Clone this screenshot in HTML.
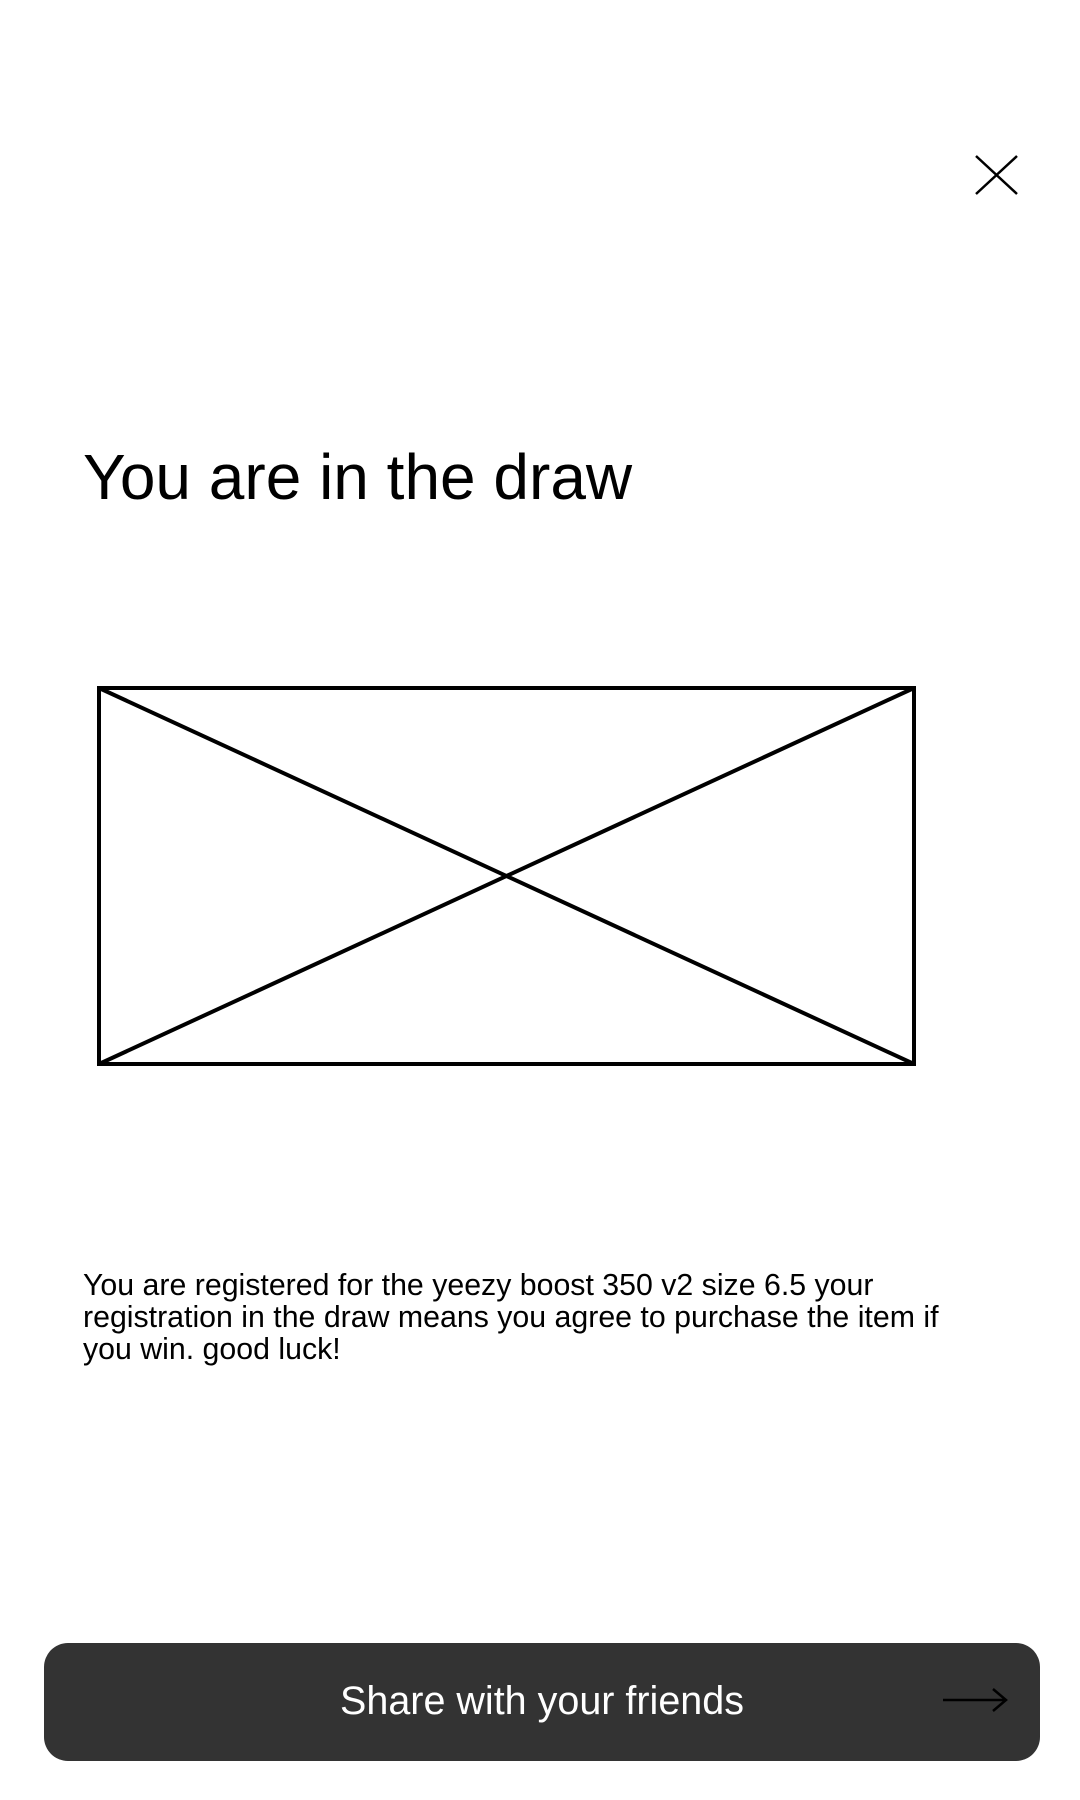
<!DOCTYPE html>
<html><head><meta charset="utf-8"><style>
html,body{margin:0;padding:0;background:#fff;width:1080px;height:1800px;overflow:hidden;font-family:"Liberation Sans",Arial,sans-serif;color:#000}
.t{position:absolute;left:83px;top:439px;font-size:64px;line-height:76px;margin:0;font-weight:normal}
.p{position:absolute;left:83px;top:1270px;width:880px;font-size:30.3px;line-height:32px;margin:0}
.b{position:absolute;left:44px;top:1643px;width:996px;height:118px;background:#333;border-radius:24px;color:#fff;font-size:39.5px;text-align:center;line-height:116px}
</style></head><body>
<svg style="position:absolute;left:972px;top:153px" width="48" height="44"><path d="M4 3L45 41M45 3L4 41" stroke="#000" stroke-width="2.5" fill="none"/></svg>
<h1 class="t">You are in the draw</h1>
<svg style="position:absolute;left:0;top:0" width="1080" height="1100"><g stroke="#000" stroke-width="4" fill="none"><rect x="99" y="688" width="815" height="376"/><path d="M99 688L914 1064M914 688L99 1064"/></g></svg>
<p class="p">You are registered for the yeezy boost 350 v2 size 6.5 your registration in the draw means you agree to purchase the item if you win. good luck!</p>
<div class="b">Share with your friends<svg style="position:absolute;left:897px;top:42px" width="68" height="30"><path d="M2 15H64M52 4L65 15L52 26" stroke="#000" stroke-width="2.5" fill="none"/></svg></div>
</body></html>
